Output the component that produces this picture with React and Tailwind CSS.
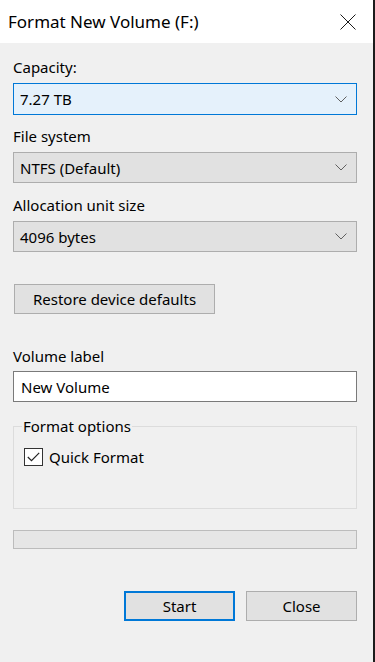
import React from "react";

function Chevron() {
  return (
    <svg width="12" height="7" viewBox="0 0 12 7" className="shrink-0">
      <path d="M0.5 0.5 L6 6 L11.5 0.5" fill="none" stroke="#606060" strokeWidth="1" />
    </svg>
  );
}

function Select({ value, active, h }) {
  return (
    <div
      className={
        "flex w-[344px] items-center justify-between border pl-[6px] pr-[9px] " +
        (h === 32 ? "h-[32px] " : "h-[31px] ") +
        (active ? "border-[#0078d7] bg-[#e5f1fb]" : "border-[#adadad] bg-[#e1e1e1]")
      }
    >
      <span className="leading-[20px]">{value}</span>
      <Chevron />
    </div>
  );
}

function Label({ children, className = "" }) {
  return <div className={"h-[20px] leading-[20px] " + className}>{children}</div>;
}

export default function App() {
  return (
    <div
      className="flex h-[662px] w-[375px] flex-col border-r-2 border-[#1c1c1c] bg-[#f0f0f0] text-[15px] text-black"
      style={{ fontFamily: '"Noto Sans", "Open Sans", sans-serif' }}
    >
      <div className="flex h-[43px] items-center justify-between bg-white pl-[8px] pr-[17px]">
        <span className="text-[17px] leading-[24px]">Format New Volume (F:)</span>
        <svg width="16" height="16" viewBox="0 0 16 16">
          <path d="M0.5 0.5 L15.5 15.5 M15.5 0.5 L0.5 15.5" stroke="#1a1a1a" strokeWidth="1" fill="none" />
        </svg>
      </div>

      <div className="flex flex-col pl-[13px]">
        <Label className="mt-[14px] mb-[6px]">Capacity:</Label>
        <Select value="7.27 TB" active h={32} />

        <Label className="mt-[11px] mb-[6px]">File system</Label>
        <Select value="NTFS (Default)" />

        <Label className="mt-[12px] mb-[6px]">Allocation unit size</Label>
        <Select value="4096 bytes" />

        <button className="mt-[32px] ml-[1px] flex h-[30px] w-[201px] items-center justify-center border border-[#adadad] bg-[#e1e1e1] leading-[20px]">
          Restore device defaults
        </button>

        <Label className="mt-[32px] mb-[5px]">Volume label</Label>
        <div className="flex h-[31px] w-[344px] items-center border border-[#7a7a7a] bg-white pl-[7px] leading-[20px]">
          New Volume
        </div>

        <fieldset className="mt-[14px] h-[93px] w-[344px] border border-[#dcdcdc] pl-[10px]">
          <legend className="ml-[-2px] px-[1px] leading-[20px]">Format options</legend>
          <div className="mt-[11px] flex items-center">
            <div className="flex h-[18px] w-[19px] items-center justify-center border border-[#333333] bg-white">
              <svg width="13" height="10" viewBox="0 0 13 10">
                <path d="M0.8 5 L4.5 8.6 L12.2 0.8" fill="none" stroke="#222222" strokeWidth="1.2" />
              </svg>
            </div>
            <span className="ml-[6px] leading-[20px]">Quick Format</span>
          </div>
        </fieldset>

        <div className="mt-[21px] h-[19px] w-[344px] border border-[#bcbcbc] bg-[#e6e6e6]" />

        <div className="mt-[42px] flex w-[344px] justify-end gap-[11px]">
          <button className="flex h-[30px] w-[111px] items-center justify-center border-2 border-[#0078d7] bg-[#e1e1e1] leading-[20px]">
            Start
          </button>
          <button className="flex h-[30px] w-[111px] items-center justify-center border border-[#adadad] bg-[#e1e1e1] leading-[20px]">
            Close
          </button>
        </div>
      </div>
    </div>
  );
}
